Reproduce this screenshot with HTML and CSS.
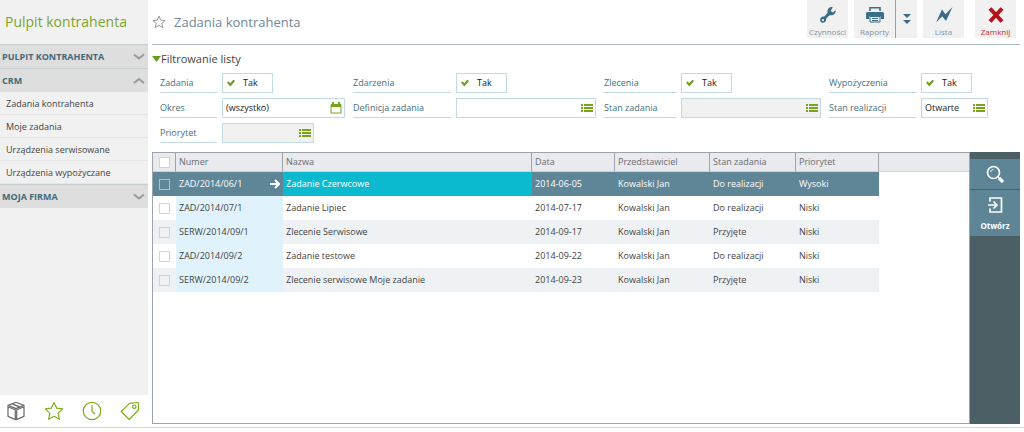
FILE: index.html
```html
<!DOCTYPE html>
<html lang="pl">
<head>
<meta charset="utf-8">
<title>Zadania kontrahenta</title>
<link rel="stylesheet" href="styles.css">
</head>
<body>
<svg class="sprite" aria-hidden="true">
  <symbol id="list" viewBox="0 0 12 9"><path d="M0 0h2v2H0zM3 0h9v2H3zM0 3h2v2H0zM3 3h9v2H3zM0 6h2v2H0zM3 6h9v2H3z"/></symbol>
  <symbol id="down" viewBox="0 0 12 8"><path d="M1 1.500l5 4 5-4"/></symbol>
  <symbol id="up" viewBox="0 0 12 8"><path d="M1 6l5-4 5 4"/></symbol>
</svg>
<div class="app">
  <aside class="sidebar">
    <h2 class="brand">Pulpit kontrahenta</h2>
    <nav class="menu" aria-label="Menu">
      <button class="group" type="button" aria-expanded="false">PULPIT KONTRAHENTA<svg class="chevron"><use href="#down"/></svg></button>
      <button class="group" type="button" aria-expanded="true">CRM<svg class="chevron"><use href="#up"/></svg></button>
      <a class="item" href="#zadania">Zadania kontrahenta</a>
      <a class="item" href="#moje">Moje zadania</a>
      <a class="item" href="#serwisowane">Urządzenia serwisowane</a>
      <a class="item" href="#wypozyczane">Urządzenia wypożyczane</a>
      <button class="group" type="button" aria-expanded="false">MOJA FIRMA<svg class="chevron"><use href="#down"/></svg></button>
    </nav>
    <div class="shortcuts">
      <button class="shortcut dark" type="button" aria-label="Moduły"><svg viewBox="0 0 20 20"><path d="M9.300 8.800v9.700L2 15.300V5.800zM10.700 8.800v9.700l7.300-3.200V5.800zM2.300 4.300L10 1.300l7.700 3L10 7.500zM6 2.900l7.800 3"/></svg></button>
      <button class="shortcut" type="button" aria-label="Ulubione"><svg viewBox="0 0 20 20"><path stroke-linejoin="round" d="M10 1.500l2.600 5.600 6.100.8-4.500 4.200 1.200 6.200-5.400-3-5.400 3 1.200-6.200L1.300 7.900l6.100-.8z"/></svg></button>
      <button class="shortcut" type="button" aria-label="Historia"><svg viewBox="0 0 20 20"><circle cx="10" cy="10" r="8.700"/><path d="M10 4v6.500l3 2.500"/></svg></button>
      <button class="shortcut" type="button" aria-label="Etykiety"><svg viewBox="0 0 20 20"><path stroke-linejoin="round" d="M1.300 10.500L9.500 2.300l8-.8q1 0 1 1v6.500L9.200 18.500z"/><circle cx="14.300" cy="5.700" r="1.700"/></svg></button>
    </div>
  </aside>
  <main class="main">
    <header class="header">
      <button class="favorite" type="button" aria-label="Dodaj do ulubionych"><svg viewBox="0 0 14 14"><path d="M7 1l1.700 4.200 4.500.3-3.500 2.900 1.200 4.400L7 10.400l-3.900 2.400 1.200-4.400L.8 5.500l4.500-.3z"/></svg></button>
      <h1 class="title">Zadania kontrahenta</h1>
      <div class="toolbar">
        <button class="tool" type="button"><svg viewBox="0 0 18 18"><path d="M16.600 4.300l-2.900 2.200-2-1.700L13.800 1.200C10.500.3 7.800 3.300 8.600 6.800L5.300 10.600C3 10.100 1 11.700 1.100 14c.1 2 1.700 3 3.200 2.800 2-.2 3.300-2 2.900-4.200l3.400-3.400c3.600.8 6.600-1.700 6-4.900zM4 13a1.100 1.100 0 1 1-.1 2.200A1.100 1.100 0 0 1 4 13z" fill-rule="evenodd"/></svg>Czynności</button>
        <div class="split">
          <button class="tool" type="button"><svg viewBox="0 0 18 18"><path d="M4 5V1.800h10V5" fill="none" stroke="currentColor" stroke-width="1.600"/><path d="M1.500 6h15Q18 6 18 7.500V13h-3v-2.500H3V13H0V7.500Q0 6 1.500 6z"/><path d="M4 10.500h10v5.500H4z" fill="#f1f1f1" stroke="currentColor"/><path d="M6 12h6v1H6zM6 14h6v1H6z"/></svg>Raporty</button>
          <button class="tool more" type="button" aria-label="Więcej raportów"><svg viewBox="0 0 10 12"><path d="M1 1h8L5 5zM1 7h8l-4 4z"/></svg></button>
        </div>
        <button class="tool" type="button"><svg viewBox="0 0 18 18"><path d="M1 16.500L7 3.500l3.500 4.800L17.500 1 11 15 7.300 10.300z"/></svg>Lista</button>
        <button class="tool close" type="button"><svg viewBox="0 0 18 18"><path d="M3 2.500l12 13M15 2.500L3 15.500" fill="none" stroke="currentColor" stroke-width="4"/></svg>Zamknij</button>
      </div>
    </header>
    <section class="filters">
      <button class="filters-title" type="button" aria-expanded="true">Filtrowanie listy</button>
      <div class="fields">
        <label class="name" for="zadania">Zadania</label>
        <label class="toggle"><input id="zadania" type="checkbox" checked>Tak</label>
        <label class="name" for="zdarzenia">Zdarzenia</label>
        <label class="toggle"><input id="zdarzenia" type="checkbox" checked>Tak</label>
        <label class="name" for="zlecenia">Zlecenia</label>
        <label class="toggle"><input id="zlecenia" type="checkbox" checked>Tak</label>
        <label class="name" for="wypozyczenia">Wypożyczenia</label>
        <label class="toggle"><input id="wypozyczenia" type="checkbox" checked>Tak</label>

        <label class="name" for="okres">Okres</label>
        <div class="picker"><input id="okres" type="text" value="(wszystko)"><button type="button" aria-label="Wybierz okres"><svg class="calendar" viewBox="0 0 12 12"><path d="M1 2.500h10v8.500H1z" fill="none" stroke="currentColor"/><path d="M1 2h10v3H1zM2 0h2v3H2zM8 0h2v3H8z"/></svg></button></div>
        <label class="name" for="definicja">Definicja zadania</label>
        <div class="picker"><input id="definicja" type="text"><button type="button" aria-label="Wybierz definicję"><svg><use href="#list"/></svg></button></div>
        <label class="name" for="stan">Stan zadania</label>
        <div class="picker muted"><input id="stan" type="text"><button type="button" aria-label="Wybierz stan"><svg><use href="#list"/></svg></button></div>
        <label class="name" for="realizacja">Stan realizacji</label>
        <div class="picker"><input id="realizacja" type="text" value="Otwarte"><button type="button" aria-label="Wybierz stan realizacji"><svg><use href="#list"/></svg></button></div>

        <label class="name" for="priorytet">Priorytet</label>
        <div class="picker muted short"><input id="priorytet" type="text"><button type="button" aria-label="Wybierz priorytet"><svg><use href="#list"/></svg></button></div>
      </div>
    </section>
    <section class="workspace">
      <div class="grid">
        <table class="tasks">
          <colgroup><col class="c-check"><col class="c-number"><col class="c-name"><col class="c-date"><col class="c-person"><col class="c-state"><col class="c-priority"><col></colgroup>
          <thead>
            <tr><th><input type="checkbox" aria-label="Zaznacz wszystkie"></th><th>Numer</th><th>Nazwa</th><th>Data</th><th>Przedstawiciel</th><th>Stan zadania</th><th>Priorytet</th><th class="rest"></th></tr>
          </thead>
          <tbody>
            <tr class="selected"><td><input type="checkbox" aria-label="Zaznacz ZAD/2014/06/1"></td><td class="number"><div class="current">ZAD/2014/06/1<svg viewBox="0 0 10 10"><path d="M0 5h8.500M5 1l4 4-4 4"/></svg></div></td><td class="active">Zadanie Czerwcowe</td><td>2014-06-05</td><td>Kowalski Jan</td><td>Do realizacji</td><td>Wysoki</td><td class="rest"></td></tr>
            <tr><td><input type="checkbox" aria-label="Zaznacz ZAD/2014/07/1"></td><td class="number">ZAD/2014/07/1</td><td>Zadanie Lipiec</td><td>2014-07-17</td><td>Kowalski Jan</td><td>Do realizacji</td><td>Niski</td><td class="rest"></td></tr>
            <tr><td><input type="checkbox" aria-label="Zaznacz SERW/2014/09/1"></td><td class="number">SERW/2014/09/1</td><td>Zlecenie Serwisowe</td><td>2014-09-17</td><td>Kowalski Jan</td><td>Przyjęte</td><td>Niski</td><td class="rest"></td></tr>
            <tr><td><input type="checkbox" aria-label="Zaznacz ZAD/2014/09/2"></td><td class="number">ZAD/2014/09/2</td><td>Zadanie testowe</td><td>2014-09-22</td><td>Kowalski Jan</td><td>Do realizacji</td><td>Niski</td><td class="rest"></td></tr>
            <tr><td><input type="checkbox" aria-label="Zaznacz SERW/2014/09/2"></td><td class="number">SERW/2014/09/2</td><td>Zlecenie serwisowe Moje zadanie</td><td>2014-09-23</td><td>Kowalski Jan</td><td>Przyjęte</td><td>Niski</td><td class="rest"></td></tr>
          </tbody>
        </table>
      </div>
      <div class="actions">
        <button class="action" type="button" aria-label="Szukaj"><svg viewBox="0 0 18 18"><circle cx="7.500" cy="7.500" r="6"/><path d="M4.500 7Q5 4.500 7.500 4.500" stroke-width="1"/><path d="M12 12l1.500 1.500"/><path d="M13 13l4 4" stroke-width="3.200"/></svg></button>
        <button class="action" type="button"><svg viewBox="0 0 18 18"><path d="M4 5.500V2h11.500v14H4v-3.500M2 9h8.500M7.500 5.500L11 9l-3.500 3.500"/></svg>Otwórz</button>
      </div>
    </section>
  </main>
</div>
</body>
</html>
```

FILE: styles.css
```css
* {
  box-sizing: border-box;
}

body {
  margin: 0;
  background: #fff;
  color: #444;
  font: 9px/12px "Open Sans", "Noto Sans", sans-serif;
}

button,
input {
  margin: 0;
  padding: 0;
  border: 0;
  background: none;
  color: inherit;
  font: inherit;
}

svg {
  display: block;
  fill: currentColor;
}

.sprite {
  position: absolute;
  width: 0;
  height: 0;
}

.app {
  display: flex;
  gap: 4px;
  min-height: calc(100vh - 4px);
  padding-right: 4px;
  border-bottom: 1px solid #d4d8de;
}

/* Sidebar */

.sidebar {
  display: flex;
  flex: 0 0 148px;
  flex-direction: column;
  background: #f1f1f1;
}

.brand {
  margin: 0;
  padding: 12px 5px;
  color: #7ea52c;
  font-size: 14px;
  font-weight: 400;
  line-height: 20px;
  white-space: nowrap;
}

.menu {
  display: flex;
  flex: 1;
  flex-direction: column;
}

.group {
  display: flex;
  align-items: center;
  justify-content: space-between;
  height: 24px;
  padding: 0 3px 0 2px;
  border-top: 1px solid #c4cdd0;
  background: #dedede;
  color: #43687b;
  font-weight: 700;
}

.chevron {
  width: 12px;
  height: 8px;
  fill: none;
  stroke: #999;
  stroke-width: 2;
}

.item {
  height: 23px;
  padding: 6px 6px 4px;
  border-bottom: 1px solid #e6e6e6;
  color: #444;
  text-decoration: none;
}

.shortcuts {
  display: flex;
  gap: 18px;
  padding: 6px;
  background: #fff;
}

.shortcut {
  color: #7fae1b;
}

.shortcut.dark {
  color: #666;
}

.shortcut svg {
  width: 20px;
  height: 20px;
  fill: none;
  stroke: currentColor;
  stroke-width: 1.2;
}

/* Header */

.main {
  display: flex;
  flex: 1;
  flex-direction: column;
  min-width: 0;
  padding-bottom: 3px;
}

.header {
  display: flex;
  align-items: flex-start;
  height: 45px;
  border-bottom: 1px solid #a9b9c1;
}

.favorite {
  padding: 15px 8px 0 0;
  color: #999;
}

.favorite svg {
  width: 14px;
  height: 14px;
  fill: none;
  stroke: currentColor;
}

.title {
  flex: 1;
  margin: 0;
  padding-top: 12px;
  color: #6f87a0;
  font-size: 13px;
  font-weight: 400;
  line-height: 20px;
}

.toolbar {
  display: flex;
  gap: 6px;
  padding-right: 4px;
}

.tool {
  display: flex;
  flex-direction: column;
  align-items: center;
  justify-content: space-between;
  width: 41px;
  height: 38px;
  padding: 6px 0 0;
  background: #f1f1f1;
  color: #8494a4;
  font-size: 8px;
}

.tool svg {
  width: 18px;
  height: 18px;
  color: #3b6c87;
}

.split {
  display: flex;
}

.tool.more {
  justify-content: center;
  width: 22px;
  padding: 0;
  border-left: 1px solid #8ba3b0;
}

.tool.more svg {
  width: 10px;
  height: 12px;
}

.tool.close {
  margin-left: 5px;
  color: #c22f2f;
}

.tool.close svg {
  color: #b5121b;
}

/* Filters */

.filters {
  padding: 6px 0 9px;
}

.filters-title {
  display: flex;
  align-items: center;
  height: 16px;
  font-size: 11px;
}

.filters-title::before {
  width: 9px;
  height: 6px;
  background: #6e9b1d;
  clip-path: polygon(0 0, 100% 0, 50% 100%);
  content: "";
}

.fields {
  display: grid;
  grid-template-columns: 57px 123px 101px 140px 75px 140px 90px 67px;
  grid-auto-rows: 20px;
  gap: 5px;
  padding: 6px 0 0 8px;
}

.name {
  padding-top: 4px;
  border-bottom: 1px solid #c3d9e4;
  color: #43707f;
  white-space: nowrap;
}

.name:not(:nth-child(8n + 1)) {
  margin-left: 3px;
}

.toggle {
  display: flex;
  align-items: center;
  justify-self: start;
  gap: 8px;
  width: 51px;
  padding-left: 4px;
  border: 1px solid #c3d9e4;
  color: #222;
}

.toggle input {
  width: 8px;
  height: 7px;
  appearance: none;
}

.toggle input:checked {
  background: #6f9d1a;
  clip-path: polygon(0 45%, 20% 25%, 40% 55%, 82% 0, 100% 20%, 42% 100%);
}

.picker {
  display: flex;
  align-items: center;
  padding: 0 2px 0 3px;
  border: 1px solid #c3d9e4;
  color: #222;
}

.picker input {
  flex: 1;
  min-width: 0;
}

.picker button {
  color: #79a51c;
}

.picker svg {
  width: 12px;
  height: 9px;
}

.picker svg.calendar {
  height: 12px;
}

.muted {
  background: #f1f1f1;
}

.short {
  width: 92px;
}

/* Task list */

.workspace {
  display: flex;
  flex: 1;
}

.grid {
  flex: 1;
  min-width: 0;
  border: 1px solid #9da3aa;
}

.tasks {
  width: 100%;
  border-collapse: separate;
  border-spacing: 0;
  table-layout: fixed;
}

.c-check { width: 23px; }
.c-number { width: 107px; }
.c-name { width: 249px; }
.c-date { width: 83px; }
.c-person { width: 95px; }
.c-state { width: 86px; }
.c-priority { width: 83px; }

.tasks th,
.tasks td {
  overflow: hidden;
  padding: 0 3px;
  text-align: left;
  white-space: nowrap;
}

.tasks th {
  height: 19px;
  border-right: 1px solid #9da3aa;
  border-bottom: 1px solid #d0d4da;
  background: #e8eaee;
  color: #6a6d73;
  font-weight: 400;
}

.tasks th.rest {
  border-right: 0;
}

.tasks td {
  height: 24px;
}

.tasks tr > :first-child {
  padding: 0 0 0 6px;
}

.tasks tbody tr:nth-child(odd) td:not(.rest) {
  background: #eff2f5;
}

.tasks tbody td.number,
.tasks tbody tr:nth-child(odd) td.number:not(.rest) {
  background: #e0f3fc;
}

.tasks tbody tr.selected:nth-child(odd) td:not(.rest) {
  background: #5f8697;
  color: #fff;
}

.tasks tbody tr.selected:nth-child(odd) td.active:not(.rest) {
  background: #0bbacf;
}

.tasks input {
  display: block;
  width: 11px;
  height: 11px;
  border: 1px solid #cfd4d8;
  appearance: none;
}

.tasks th input {
  background: #fff;
}

.tasks .selected input {
  border-color: #a9c2cd;
}

.current {
  display: flex;
  align-items: center;
  justify-content: space-between;
}

.current svg {
  width: 10px;
  height: 10px;
  fill: none;
  stroke: currentColor;
  stroke-width: 2;
}

.actions {
  display: flex;
  flex: 0 0 50px;
  flex-direction: column;
  gap: 1px;
  padding-top: 7px;
  background: #4b5f65;
}

.action {
  display: flex;
  flex-direction: column;
  align-items: center;
  gap: 7px;
  padding: 6px 0;
  background: #5d8596;
  color: #fff;
  font-size: 8px;
  font-weight: 700;
  line-height: 9px;
}

.action svg {
  width: 18px;
  height: 18px;
  fill: none;
  stroke: currentColor;
  stroke-width: 1.7;
}
```
